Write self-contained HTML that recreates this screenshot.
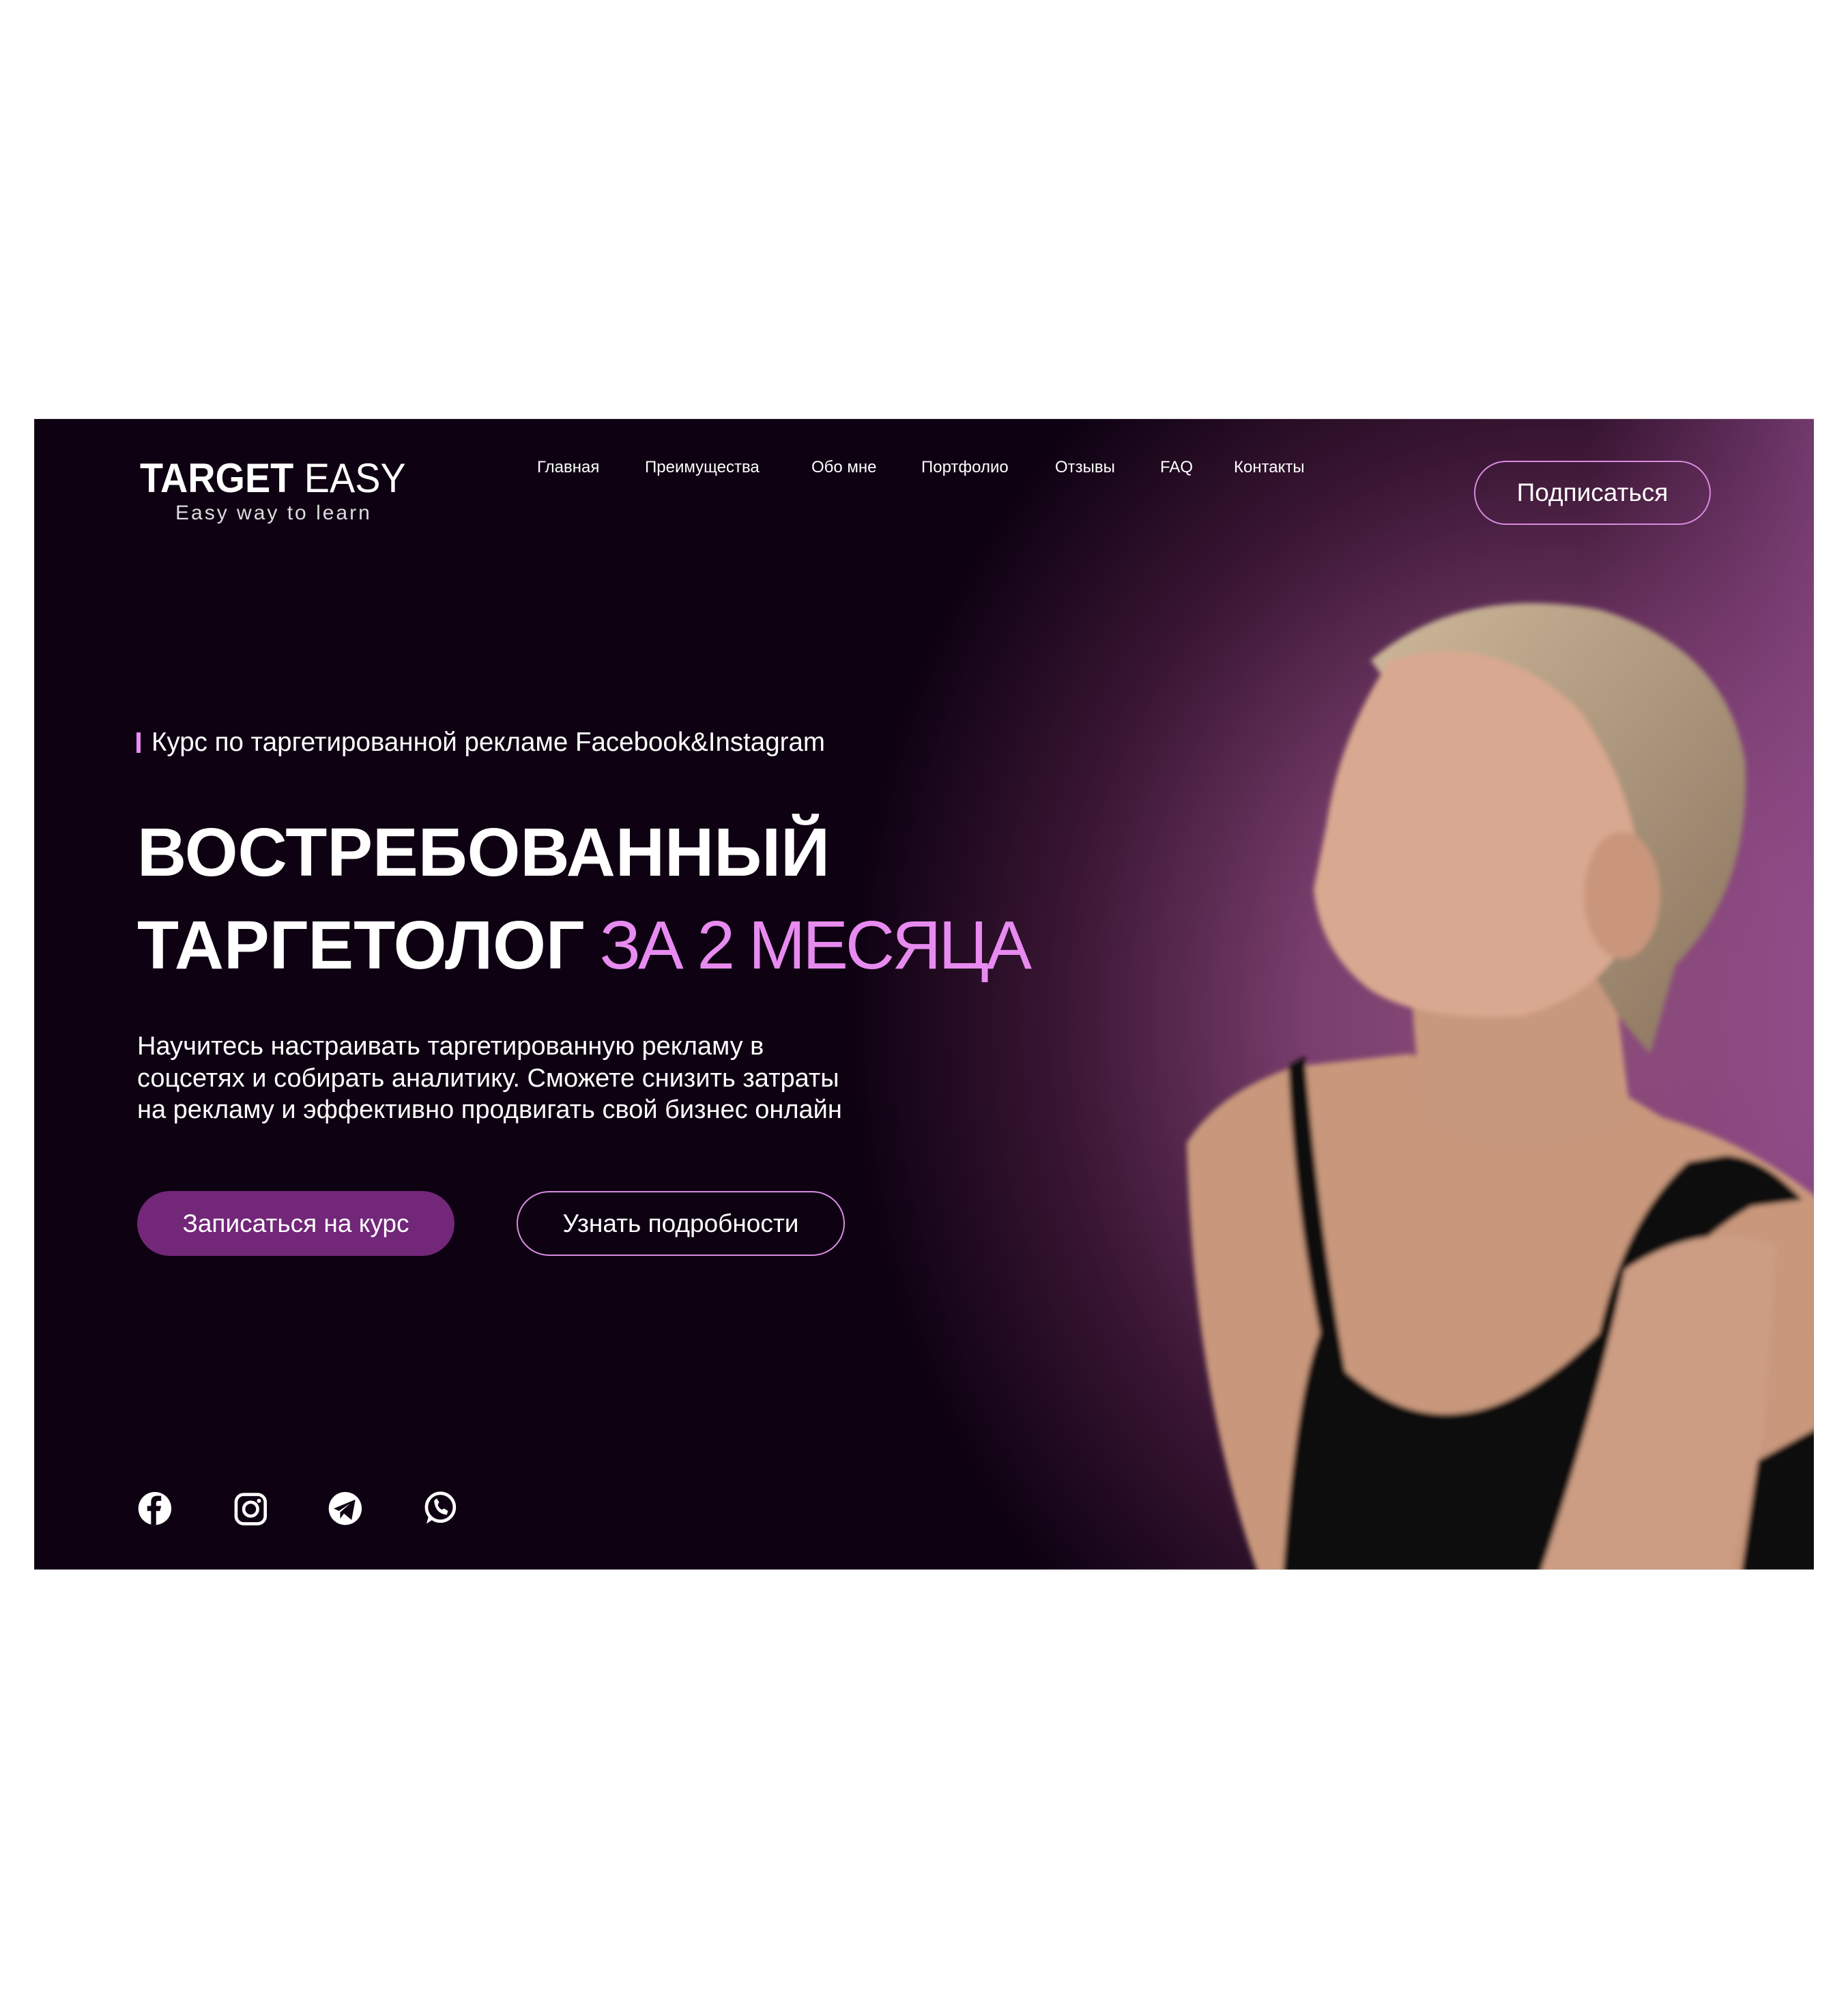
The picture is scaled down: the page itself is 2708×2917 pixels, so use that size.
<!DOCTYPE html>
<html><head><meta charset="utf-8"><style>
html,body{margin:0;padding:0;background:#fff;}
body{width:2708px;height:2917px;position:relative;overflow:hidden;font-family:"Liberation Sans",sans-serif;color:#fff;}
.t{position:absolute;white-space:nowrap;}
.nav{top:668px;font-size:24px;line-height:34px;}
.btn{position:absolute;border-radius:60px;box-sizing:border-box;display:flex;align-items:center;justify-content:center;font-size:37px;}
</style></head><body>
<svg style="position:absolute;left:0;top:0" width="2708" height="2917" viewBox="0 0 1456 1568" preserveAspectRatio="none">
<defs>
<radialGradient id="g" cx="1230" cy="800" r="560" gradientUnits="userSpaceOnUse" gradientTransform="translate(1230 800) scale(1 1.15) translate(-1230 -800)">
<stop offset="0" stop-color="#8f507c"/><stop offset="0.35" stop-color="#7a3f6e"/><stop offset="0.7" stop-color="#3a1634"/><stop offset="1" stop-color="#0e0112"/>
</radialGradient>
<linearGradient id="rg" x1="0" x2="1" y1="0" y2="0"><stop offset="0" stop-color="#9a4d8e" stop-opacity="0"/><stop offset="1" stop-color="#a0569a" stop-opacity="0.6"/></linearGradient>
<linearGradient id="hair" x1="0" y1="0" x2="1" y2="1"><stop offset="0" stop-color="#cdb89b"/><stop offset="1" stop-color="#8a735d"/></linearGradient>
<filter id="bl"><feGaussianBlur stdDeviation="2"/></filter>
<clipPath id="cp"><rect x="27" y="330" width="1402" height="906"/></clipPath>
</defs>
<rect x="27" y="330" width="1402" height="906" fill="#0e0112"/>
<rect x="27" y="330" width="1402" height="906" fill="url(#g)"/>
<rect x="1250" y="330" width="179" height="906" fill="url(#rg)"/>
<g clip-path="url(#cp)"><g filter="url(#bl)">
<path d="M935 900 Q960 860 1020 840 L1110 830 Q1180 850 1260 850 L1310 880 Q1380 900 1440 950 L1440 1250 L995 1250 Q940 1100 935 900 Z" fill="#c8977c"/>
<path d="M1110 760 L1270 760 L1285 880 Q1200 930 1120 880 Z" fill="#c8987e"/>
<path d="M1080 520 Q1150 460 1260 480 Q1360 510 1375 600 Q1380 700 1320 760 L1300 830 L1275 800 L1240 740 Z" fill="url(#hair)"/>
<path d="M1095 520 Q1180 495 1245 560 Q1300 640 1290 720 Q1270 780 1200 800 Q1120 805 1080 780 Q1040 750 1035 700 L1045 650 Q1055 580 1095 520 Z" fill="#d9a890"/>
<ellipse cx="1278" cy="705" rx="30" ry="50" fill="#c9967c"/>
<path d="M1015 840 L1028 832 Q1040 970 1060 1080 Q1150 1160 1260 1050 Q1280 960 1330 915 L1360 910 Q1390 912 1420 945 L1380 950 Q1310 990 1270 1080 L1250 1140 L1210 1250 L1010 1250 Q1020 1100 1040 1050 Q1020 950 1015 840 Z" fill="#0c0a10"/>
<path d="M1370 1250 L1385 1150 L1440 1120 L1440 1250 Z" fill="#0c0a10"/>
<path d="M1280 1000 Q1340 960 1400 980 L1390 1130 L1360 1250 L1210 1250 Q1260 1100 1280 1000 Z" fill="#cc9c83"/>
</g></g>
<g fill="#fff">
<circle cx="122" cy="1188" r="13"/>
<path d="M119 1201 L119 1190 L116 1190 L116 1186 L119 1186 L119 1183 Q119 1178 124 1178 L127 1178 L127 1182 L125 1182 Q123 1182 123 1184 L123 1186 L127 1186 L126 1190 L123 1190 L123 1201 Z" fill="#0e0112"/>
<rect x="186" y="1177" width="23" height="23" rx="6" fill="none" stroke="#fff" stroke-width="2.5"/>
<circle cx="197.5" cy="1188.5" r="5.5" fill="none" stroke="#fff" stroke-width="2.5"/>
<circle cx="204" cy="1182" r="1.6"/>
<circle cx="272" cy="1188" r="13"/>
<path d="M263 1188 L280 1181 L277 1197 L271 1192 L268 1196 L268 1191 L276 1184 L267 1190 Z" fill="#0e0112"/>
<circle cx="347" cy="1187" r="11" fill="none" stroke="#fff" stroke-width="2.5"/>
<path d="M336 1200 L338 1193 L342 1196 Z"/>
<path d="M342 1182 Q343 1192 352 1193 L353 1190 L350 1188 L348 1189 Q345 1187 345 1185 L346 1183 L344 1180 Z"/>
</g>
</svg>

<div class="t" style="left:205px;top:666px;font-size:60px;line-height:70px;transform:scaleX(0.93);transform-origin:0 0;"><b>TARGET</b> <span style="font-weight:normal;">EASY</span></div>
<div class="t" style="left:257px;top:732px;font-size:30px;line-height:40px;letter-spacing:3px;color:#ddd;">Easy way to learn</div>

<div class="t nav" style="left:787px">Главная</div>
<div class="t nav" style="left:945px">Преимущества</div>
<div class="t nav" style="left:1189px">Обо мне</div>
<div class="t nav" style="left:1350px">Портфолио</div>
<div class="t nav" style="left:1546px">Отзывы</div>
<div class="t nav" style="left:1700px">FAQ</div>
<div class="t nav" style="left:1808px">Контакты</div>

<div class="btn" style="left:2160px;top:675px;width:347px;height:94px;border:2px solid #d98be0;">Подписаться</div>

<div style="position:absolute;left:200px;top:1073px;width:6px;height:30px;background:#e88bf0"></div>
<div class="t" style="left:222px;top:1065px;font-size:38.5px;line-height:46px;">Курс по таргетированной рекламе Facebook&amp;Instagram</div>

<div class="t" style="left:201px;top:1184px;font-size:100px;line-height:130px;font-weight:bold;">ВОСТРЕБОВАННЫЙ</div>
<div class="t" style="left:201px;top:1320px;font-size:100px;line-height:130px;"><b>ТАРГЕТОЛОГ</b><span style="color:#e88bf0;font-weight:normal;letter-spacing:-4px;margin-left:22px;">ЗА 2 МЕСЯЦА</span></div>

<div class="t" style="left:201px;top:1510px;font-size:38px;line-height:46.5px;">Научитесь настраивать таргетированную рекламу в<br>соцсетях и собирать аналитику. Сможете снизить затраты<br>на рекламу и эффективно продвигать свой бизнес онлайн</div>

<div class="btn" style="left:201px;top:1745px;width:465px;height:95px;background:#722778;">Записаться на курс</div>
<div class="btn" style="left:757px;top:1745px;width:481px;height:95px;border:2px solid #d98be0;">Узнать подробности</div>
</body></html>
